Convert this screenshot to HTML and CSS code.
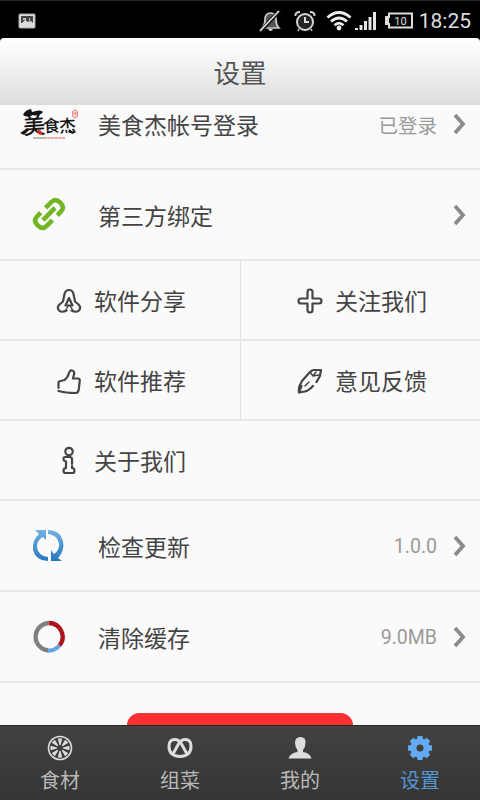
FILE: index.html
```html
<!DOCTYPE html>
<html lang="zh-CN">
<head>
<meta charset="utf-8">
<title>设置</title>
<link rel="stylesheet" href="styles.css">
</head>
<body>
<div class="phone">
  <div class="status">
    <svg class="photo" width="18" height="16" viewBox="0 0 18 16"><rect x="1" y="1" width="16" height="14" rx="1" fill="#ddd" stroke="#aaa"/><path d="M3 3h12v7l-2-2-3 1-3-2-3 3H3z" fill="#444"/><path d="M5 5h3v2H5zM11 5h1v3h-1z" fill="#bbb"/></svg>
    <svg width="24" height="24" viewBox="0 0 24 24"><path d="M4 19Q7 16 7 11Q7 4 12.500 4Q18 4 18 11Q18 16 21 19Z" fill="#555" stroke="#ccc" stroke-width="1.700"/><path d="M10 20q2.500 4 5 0" fill="#ddd"/><path d="M22 1L2 23" stroke="#111" stroke-width="4"/><path d="M21 2L2 22" stroke="#ddd" stroke-width="1.800"/></svg>
    <svg class="alarm" width="22" height="22" viewBox="0 0 22 22"><circle cx="11" cy="12" r="8" fill="#222" stroke="#d5d5d5" stroke-width="2"/><path d="M1.500 6Q1 2 6 2M20.500 6Q21 2 16 2" fill="none" stroke="#d5d5d5" stroke-width="2"/><path d="M11 7v5h4" fill="none" stroke="#ddd" stroke-width="2"/><path d="M5 19l-1 2M17 19l1 2" stroke="#ccc" stroke-width="1.500"/></svg>
    <svg class="wifi" width="26" height="21" viewBox="0 0 26 21"><g fill="none" stroke="#eee" stroke-width="2.800"><path d="M1.500 7.500Q13-2.500 24.500 7.500M5 11.500Q13 4.500 21 11.500M8.500 15.200Q13 11 17.500 15.200"/></g><circle cx="13" cy="18" r="2.400" fill="#eee"/></svg>
    <svg class="signal" width="23" height="20" viewBox="0 0 23 20"><path d="M1 17h3v2H1zM5.500 14h3v5h-3zM10 10h3v9h-3zM14.500 6h3v13h-3zM19 1h3v18h-3z" fill="#e5e5e5"/></svg>
    <svg class="battery" width="30" height="17" viewBox="0 0 30 17"><path d="M5 1.500h23v14H5V12H2V5h3z" fill="#050505" stroke="#ddd" stroke-width="2"/><path d="M2 5h3v7H2z" fill="#ddd"/><text x="16.500" y="12.500" text-anchor="middle" font-family="Roboto" font-size="11" fill="#ddd">10</text></svg>
    <span class="time">18:25</span>
  </div>
  <header class="header">设置</header>
  <main class="content">
    <div class="list">
      <div class="row">
        <svg class="logo" width="60" height="36" viewBox="0 0 60 36">
          <g fill="#151515" font-family="Noto Sans CJK SC, sans-serif" font-weight="500">
            <text x="5" y="28" font-size="22" transform="rotate(-4 14 18)">美</text>
            <text x="25" y="26" font-size="17" transform="rotate(-4 32 18)">食</text>
            <text x="41" y="26" font-size="17" transform="rotate(-4 48 18)">杰</text>
          </g>
          <path d="M5 9Q7 4 13 3l1 3q9-3 11 0-4 5-10 3Q9 12 5 9zM2 27l8-5 1 2-5 5zM51 24l6 2-2 2-5-2z" fill="#151515"/>
          <path d="M19 26l2-3 2 2 2 2-3 2z" fill="#d92f30"/>
          <ellipse cx="57" cy="8" rx="2.600" ry="4" fill="#fff1f1" stroke="#df7777"/><path d="M55.500 7h3M56.500 9h2" stroke="#df5555"/>
          <path d="M15 32h11" stroke="#777"/><path d="M26 32h21" stroke="#dd5555" stroke-dasharray="3 .6"/>
        </svg>
        <span class="label">美食杰帐号登录</span><span class="value">已登录</span>
        <svg class="chevron" width="14" height="22" viewBox="0 0 14 22"><path d="M2 2l8 9-8 9" fill="none" stroke="#8b8b8b" stroke-width="3.800"/></svg>
      </div>
      <div class="row">
        <svg class="lead link" width="34" height="34" viewBox="0 0 34 34"><g transform="translate(17 17) rotate(-45)" fill="none" stroke="#72b626" stroke-width="4.600"><path d="M-5-6.800h-5q-6 0-6 6.800t6 6.800h8M5 6.800h5q6 0 6-6.800t-6-6.800H2M-8.500 0H8.500"/></g></svg>
        <span class="label">第三方绑定</span>
        <svg class="chevron" width="14" height="22" viewBox="0 0 14 22"><path d="M2 2l8 9-8 9" fill="none" stroke="#8b8b8b" stroke-width="3.800"/></svg>
      </div>
      <div class="grid">
        <div class="cell"><svg width="26" height="26" viewBox="0 0 26 26"><path d="M10.500 22.500Q6 25 3 22.500 .5 19.500 3.500 16.500L7 13.500 8.500 6Q9.500 2 13 2t4.500 4L19 13.500l3.500 3q3 3 .5 6-3 2.500-7.500 0M9.500 17.500h7L13 10z"/><path d="M12.500 17.500l-3 5M14 17.500l3 5" stroke-width="1.300"/></svg>软件分享</div>
        <div class="cell"><svg width="26" height="26" viewBox="0 0 26 26"><path d="M10.500 4q0-2.500 2.500-2.500T15.500 4v6.500H22q2.500 0 2.500 2.500T22 15.500h-6.500V22q0 2.500-2.500 2.500T10.500 22v-6.500H4q-2.500 0-2.500-2.500T4 10.500h6.500z"/></svg>关注我们</div>
        <div class="cell"><svg width="26" height="26" viewBox="0 0 26 26"><path d="M2.500 20v-5q0-2 2-2l4-1q3-2 4.500-7 1-3 3-2.500 3 .5 2 4L17 10.500h5q2 0 1.700 2.500l-1 9q-.5 3-3 3Q9 25 2.500 23"/></svg>软件推荐</div>
        <div class="cell"><svg width="26" height="26" viewBox="0 0 26 26"><path d="M4.500 18L2 24.500Q1 19 5 13l8-9q2-2 4-2h7l-1 6-3.500 6M16 18q-5 5-8 5.500L2 24.500"/><path d="M8 18l4-4M13 4l3 4 6-1M16 8l3-4" stroke-width="1.500"/></svg>意见反馈</div>
        <div class="cell about"><svg width="26" height="30" viewBox="0 0 26 30"><circle cx="13" cy="5.500" r="3.700"/><path d="M10 11H9q-1.500 0-1.500 2T10 15.500V22q-2.500 0-2.500 3 0 2 2 2h7q2 0 2-2 0-3-2.500-3v-2M16 18v-5q0-2-2.500-2H10"/></svg>关于我们</div>
      </div>
      <div class="row">
        <svg class="lead" width="34" height="34" viewBox="0 0 34 34"><defs><linearGradient id="sync" x1="0" y1="0" x2="0" y2="1"><stop stop-color="#73b3e6"/><stop offset="1" stop-color="#2778bc"/></linearGradient></defs><path fill="url(#sync)" d="M3 1h11v10l-3-3Q5 11 5 18q1 9 11 10v4Q4 32 1 21 0 11 7 5zM16 1q12 0 15 11 2 10-5 17l4 3H19V21l3 4q6-4 5-11-2-8-11-9z"/></svg>
        <span class="label">检查更新</span><span class="value latin">1.0.0</span>
        <svg class="chevron" width="14" height="22" viewBox="0 0 14 22"><path d="M2 2l8 9-8 9" fill="none" stroke="#8b8b8b" stroke-width="3.800"/></svg>
      </div>
      <div class="row">
        <svg class="lead" width="34" height="34" viewBox="0 0 34 34"><g fill="none" stroke-width="4.300"><path stroke="#a9161d" d="M16.500 3A13.800 13.800 0 0 1 27.500 25.500"/><path stroke="#67a5e0" d="M27.500 25.500A13.800 13.800 0 0 1 16 30.500"/><path stroke="#808080" d="M16 30.500A13.800 13.800 0 0 1 16.500 3"/></g></svg>
        <span class="label">清除缓存</span><span class="value latin">9.0MB</span>
        <svg class="chevron" width="14" height="22" viewBox="0 0 14 22"><path d="M2 2l8 9-8 9" fill="none" stroke="#8b8b8b" stroke-width="3.800"/></svg>
      </div>
    </div>
    <div class="logout"></div>
  </main>
  <nav class="tabs">
    <div class="tab"><svg width="26" height="26" viewBox="0 0 26 26"><circle cx="13" cy="13" r="11.500" fill="none" stroke="#ddd" stroke-width="1.600"/><g fill="#ddd"><path id="seg" d="M10.800 3.500h4.400L13.600 10h-1.200z"/><use href="#seg" transform="rotate(45 13 13)"/><use href="#seg" transform="rotate(90 13 13)"/><use href="#seg" transform="rotate(135 13 13)"/><use href="#seg" transform="rotate(180 13 13)"/><use href="#seg" transform="rotate(225 13 13)"/><use href="#seg" transform="rotate(270 13 13)"/><use href="#seg" transform="rotate(315 13 13)"/></g></svg><span>食材</span></div>
    <div class="tab"><svg width="26" height="26" viewBox="0 0 26 26"><path d="M6 19L11.500 9Q14.500 4 19 4.500q5 .5 5 7Q24 21 13 21.500 2 21 2 11.500 2 5 7 4.500q4.500-.5 7.500 4.500L20 19" fill="none" stroke="#ddd" stroke-width="3"/></svg><span>组菜</span></div>
    <div class="tab"><svg width="26" height="26" viewBox="0 0 26 26"><path d="M8 8q0-6 5.500-6T18.500 8q0 4-2.500 7v2q7 1 8.500 6.500h-23Q3 18 10.500 17v-2Q8 12 8 8z" fill="#ddd"/></svg><span>我的</span></div>
    <div class="tab active"><svg width="26" height="26" viewBox="0 0 26 26"><g fill="#63aaf0"><path id="cog" d="M10.500 1h5l1 5h-7zM10.500 25h5l1-5h-7z"/><use href="#cog" transform="rotate(45 13 13)"/><use href="#cog" transform="rotate(90 13 13)"/><use href="#cog" transform="rotate(135 13 13)"/></g><circle cx="13" cy="13" r="6.500" fill="none" stroke="#63aaf0" stroke-width="6"/></svg><span>设置</span></div>
  </nav>
</div>
</body>
</html>
```
FILE: styles.css
```css
* { box-sizing: border-box; }
body { margin: 0; background: #000; font-family: "Noto Sans CJK SC", sans-serif; color: #444; }
svg { display: block; flex: none; }
.phone { width: 480px; height: 800px; display: flex; flex-direction: column; overflow: hidden; }
.status { height: 38px; flex: none; display: flex; align-items: center; padding: 2px 9px 0 18px; background: #000; border-top: 1px solid #282828; }
.photo { margin-right: auto; }
.alarm { margin-left: 12px; }
.wifi { margin-left: 10px; }
.signal { margin-left: 2px; }
.battery { margin-left: 7px; }
.time { width: 53px; margin-left: 4px; font: 21px Roboto, sans-serif; color: #ddd; text-align: right; }
.header { height: 67px; flex: none; border-radius: 4px 4px 0 0; background: linear-gradient(#fff, #f4f4f4 35%, #dcdcdc); text-align: center; font-size: 26.500px; line-height: 67px; color: #555; }
.content { height: 620px; flex: none; overflow: hidden; background: #fafafa; }
.list { margin-top: -26px; }
.row { height: 91px; display: flex; align-items: center; padding: 0 13px 0 32px; border-bottom: 2px solid #e7e7e7; }
.lead { margin-top: 1px; }
.link { margin-top: -2px; overflow: visible; }
.logo { margin: 0 0 0 -14px; }
.label { margin-left: 32px; font-size: 23px; white-space: nowrap; }
.logo + .label { margin-left: 20px; }
.value { margin-left: auto; padding-top: 2px; font-size: 19.500px; color: #999; }
.latin { font-family: Roboto, sans-serif; font-size: 19.500px; }
.chevron { margin-left: auto; margin-top: 1px; }
.value + .chevron { margin-left: 16px; }
.grid { display: grid; grid-template-columns: 1fr 1fr; }
.cell { height: 80px; display: flex; align-items: center; gap: 12px; padding-left: 56px; border-bottom: 2px solid #e7e7e7; font-size: 23px; }
.cell:nth-child(even) { padding-left: 56px; border-left: 1px solid #e4e4e4; }
.cell svg { margin-top: 2px; fill: none; stroke: #444; stroke-width: 2.200; stroke-linejoin: round; stroke-linecap: round; }
.about { grid-column: span 2; }
.logout { width: 226px; height: 50px; margin: 30px auto 0; border-radius: 12px; background: #fb2e32; border: 1px solid #e63b3e; }
.tabs { height: 75px; flex: none; display: grid; grid-template-columns: repeat(4, 1fr); background: linear-gradient(#424242, #353535); border-top: 1px solid #292929; }
.tab { display: flex; flex-direction: column; align-items: center; padding-top: 9px; color: #b8b8b8; font-size: 20px; line-height: 30px; }
.tab span { margin-top: 4px; }
.active { color: #5595d2; }
```
